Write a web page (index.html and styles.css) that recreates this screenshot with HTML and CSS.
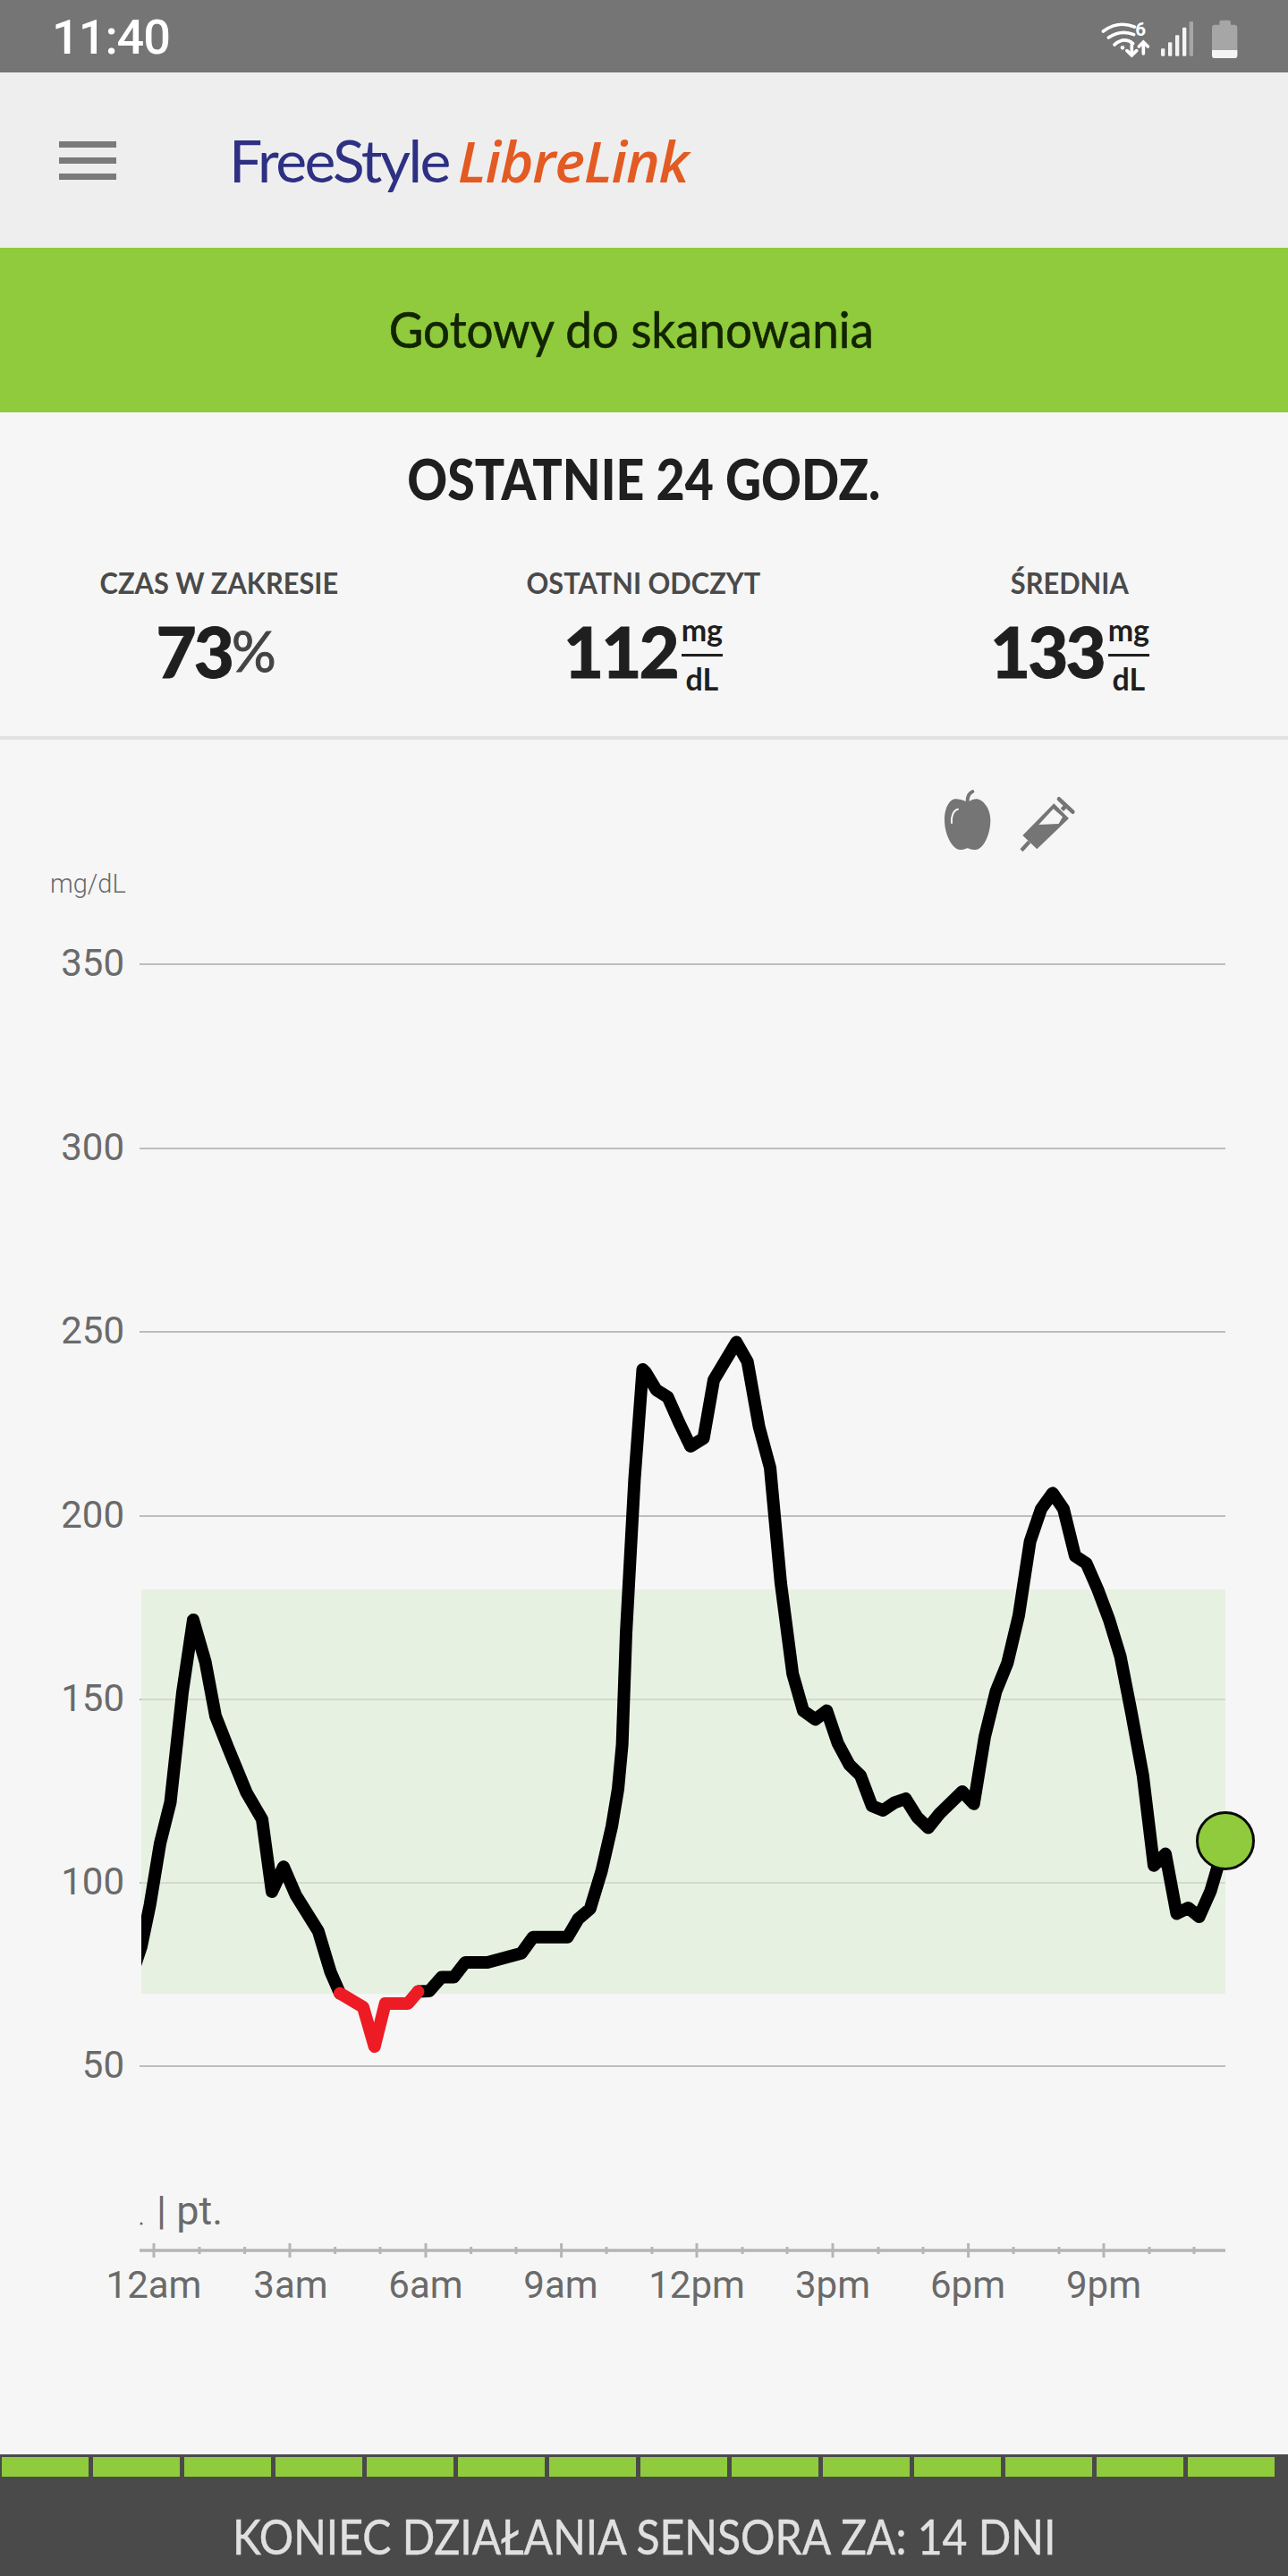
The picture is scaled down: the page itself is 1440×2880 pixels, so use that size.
FILE: index.html
```html
<!DOCTYPE html>
<html>
<head>
  <meta charset="utf-8">
  <title>FreeStyle LibreLink</title>
  <link rel="stylesheet" href="styles.css">
</head>
<body>
  <div class="status-bar">
    <span class="clock">11:40</span>
    <svg class="status-icons" width="240" height="80" viewBox="0 0 720 240">
      <g class="wifi">
        <path d="M100 105Q150 68 205 90"/>
        <path d="M118 126Q160 98 203 116"/>
        <path d="M138 150Q170 122 200 146"/>
        <path d="M196 150V184M180 170L196 186L212 170"/>
        <path d="M235 180V142M220 156L235 141L250 156"/>
      </g>
      <circle class="white-fill" cx="165" cy="160" r="7"/>
      <text class="wifi-six" x="208" y="120">6</text>
      <rect class="white-fill" x="294" y="163" width="13" height="25" rx="3"/>
      <rect class="white-fill" x="318" y="142" width="13" height="46" rx="3"/>
      <rect class="white-fill" x="342" y="118" width="13" height="70" rx="3"/>
      <rect class="white-fill" x="366" y="92" width="13" height="96" rx="3"/>
      <rect class="dim-fill" x="389" y="72" width="13" height="116" rx="3"/>
      <rect class="dim-fill" x="490" y="68" width="38" height="30" rx="6"/>
      <rect class="dim-fill" x="465" y="83" width="85" height="112" rx="10"/>
      <path class="white-fill" d="M465 168H550V185A10 10 0 0 1 540 195H475A10 10 0 0 1 465 185Z"/>
    </svg>
  </div>

  <header class="top-bar">
    <div class="menu-icon"><span></span><span></span><span></span></div>
    <div class="logo"><span class="logo-free">FreeStyle</span><span class="logo-libre">LibreLink</span></div>
  </header>

  <div class="scan-banner"><span>Gotowy do skanowania</span></div>

  <section class="summary">
    <h1 class="summary-title"><span>OSTATNIE 24 GODZ.</span></h1>
    <div class="stats">
      <div class="stat">
        <div class="stat-label"><span>CZAS W ZAKRESIE</span></div>
        <div class="stat-value stat-value-percent">73<span class="percent">%</span></div>
      </div>
      <div class="stat">
        <div class="stat-label"><span>OSTATNI ODCZYT</span></div>
        <div class="stat-value">112<span class="unit"><span class="unit-top">mg</span><span class="unit-bottom">dL</span></span></div>
      </div>
      <div class="stat">
        <div class="stat-label"><span>ŚREDNIA</span></div>
        <div class="stat-value">133<span class="unit"><span class="unit-top">mg</span><span class="unit-bottom">dL</span></span></div>
      </div>
    </div>
  </section>

  <svg class="chart" viewBox="0 827 1440 1917">
    <!-- apple -->
    <g transform="translate(1000 860) scale(0.3333)">
      <path class="icon-fill" d="M245 112C230 102 215 100 205 100C185 100 168 130 168 170C168 220 195 268 220 270C232 272 240 265 245 265C250 265 258 272 272 270C298 268 322 220 322 170C322 130 295 100 275 100C265 100 255 104 245 112Z"/>
      <path class="icon-stem" d="M245 108C245 90 250 80 262 75"/>
      <path class="icon-shine" d="M213 134C197 138 190 158 192 180"/>
      <!-- syringe -->
      <path class="icon-fill" d="M430 222L535 115L585 165L478 268Z"/>
      <path class="icon-window" d="M484 186L533 133L564 160L551 183Z"/>
      <path class="icon-stem syringe-bar" d="M552 100L598 143"/>
      <path class="icon-stem syringe-rod" d="M562 136L578 120"/>
      <path class="icon-stem syringe-needle" d="M452 244L426 272"/>
    </g>

    <text class="mg-label" x="56" y="998">mg/dL</text>

    <line class="grid" x1="156" y1="1078" x2="1370" y2="1078"/>
    <line class="grid" x1="156" y1="1284" x2="1370" y2="1284"/>
    <line class="grid" x1="156" y1="1489" x2="1370" y2="1489"/>
    <line class="grid" x1="156" y1="1695" x2="1370" y2="1695"/>
    <line class="grid" x1="156" y1="1900" x2="1370" y2="1900"/>
    <line class="grid" x1="156" y1="2105" x2="1370" y2="2105"/>
    <line class="grid" x1="156" y1="2310" x2="1370" y2="2310"/>
    <rect class="range" x="158" y="1777" width="1212" height="452"/>

    <text class="y-label" x="139" y="1091">350</text>
    <text class="y-label" x="139" y="1297">300</text>
    <text class="y-label" x="139" y="1502">250</text>
    <text class="y-label" x="139" y="1708">200</text>
    <text class="y-label" x="139" y="1913">150</text>
    <text class="y-label" x="139" y="2118">100</text>
    <text class="y-label" x="139" y="2323">50</text>

    <clipPath id="plot"><rect x="158" y="1000" width="1240" height="1400"/></clipPath>
    <g clip-path="url(#plot)">
      <polyline class="trace" points="150,2200 158,2176 167.6,2130 179,2061 190.5,2015 204,1892 216,1811 229.6,1858 241,1918.6 255,1954 275.5,2004 293,2034 304,2115 317,2087 330.6,2118.6 355.8,2159 369.6,2204.7 380,2228.5"/>
      <polyline class="trace" points="467.4,2226.6 480,2226 493.6,2210.5 507.4,2210.5 520.2,2194 545,2194 583,2183.7 596,2165.7 634.5,2165.7 646.5,2145.4 659.8,2134 672.6,2091.8 684,2042 691,2000 695.6,1950.7 700,1825.7 709.4,1654 718.5,1531 722,1534.5 733.8,1554 746.6,1562 759,1590 772,1617 786.6,1608 798,1542.8 823.3,1500.6 835.7,1522.4 848.6,1595 861,1641 872.9,1769.6 886.2,1871.4 898,1912.6 911.5,1922.3 924.3,1912.6 936.7,1949 949.6,1973 962,1985 974.8,2019 987.2,2024 1000,2015.4 1012.5,2011 1025.3,2031.4 1037.7,2043.5 1050.6,2027.5 1075.8,2003 1088.7,2016.8 1101,1941.7 1113.5,1890.8 1126.3,1859.3 1139,1806 1151.6,1723.6 1164,1687 1176.8,1669.3 1189,1687 1202,1739.6 1214.5,1747.8 1227.3,1777 1240,1810.8 1252.6,1852 1265.4,1917.5 1277.8,1985 1290,2085.7 1303,2072.6 1315.5,2139.5 1328.4,2133 1340.7,2143 1353.6,2113.8 1370,2058"/>
      <polyline class="trace trace-low" points="380,2228.5 406,2244 418.7,2288 430.7,2240 456,2240 467.4,2226.6"/>
    </g>
    <circle class="current" cx="1370" cy="2058" r="31.5"/>

    <circle class="day-mark" cx="158" cy="2486" r="1.5"/>
    <text class="day-label" x="175" y="2487">| pt.</text>

    <line class="axis" x1="156" y1="2516" x2="1370" y2="2516"/>
    <path class="tick-major" d="M172 2508V2524M324 2508V2524M476 2508V2524M627.6 2508V2524M779 2508V2524M931 2508V2524M1082.6 2508V2524M1234 2508V2524"/>
    <path class="tick-minor" d="M223 2512V2520M273.6 2512V2520M374.6 2512V2520M425 2512V2520M526.6 2512V2520M577 2512V2520M678 2512V2520M729 2512V2520M830 2512V2520M880 2512V2520M982 2512V2520M1032 2512V2520M1133 2512V2520M1184 2512V2520M1285 2512V2520M1335 2512V2520"/>

    <text class="x-label" x="172" y="2569">12am</text>
    <text class="x-label" x="325" y="2569">3am</text>
    <text class="x-label" x="476" y="2569">6am</text>
    <text class="x-label" x="627" y="2569">9am</text>
    <text class="x-label" x="779" y="2569">12pm</text>
    <text class="x-label" x="931" y="2569">3pm</text>
    <text class="x-label" x="1082" y="2569">6pm</text>
    <text class="x-label" x="1234" y="2569">9pm</text>
  </svg>

  <footer class="sensor">
    <div class="sensor-days">
      <span></span><span></span><span></span><span></span><span></span><span></span><span></span>
      <span></span><span></span><span></span><span></span><span></span><span></span><span></span>
    </div>
    <div class="sensor-text"><span>KONIEC DZIAŁANIA SENSORA ZA: 14 DNI</span></div>
  </footer>
</body>
</html>
```

FILE: styles.css
```css
* {
  box-sizing: border-box;
}

body {
  margin: 0;
  width: 1440px;
  height: 2880px;
  display: flex;
  flex-direction: column;
  overflow: hidden;
  background-color: #f6f6f6;
  font-family: "Lato", "Noto Sans", sans-serif;
}

/* the app font is narrower than Lato */
.scan-banner span,
.summary-title span,
.stat-label span,
.sensor-text span {
  display: inline-block;
  white-space: nowrap;
}

/* status bar */
.status-bar {
  height: 81px;
  flex: none;
  display: flex;
  justify-content: space-between;
  background-color: #757575;
}

.clock {
  padding-left: 58px;
  font-family: "Roboto", sans-serif;
  font-size: 54px;
  font-weight: 500;
  line-height: 84px;
  letter-spacing: -1px;
  color: #fff;
}

.wifi path {
  fill: none;
  stroke: #fff;
  stroke-width: 11;
  stroke-linecap: round;
}

.wifi-six {
  font-family: "Roboto", sans-serif;
  font-size: 62px;
  font-weight: 700;
  fill: #fff;
}

.white-fill {
  fill: #f4f4f4;
}

.dim-fill {
  fill: #a6a6a6;
}

/* header */
.top-bar {
  height: 196px;
  flex: none;
  display: flex;
  align-items: center;
  padding-left: 66px;
  background-color: #eeeeee;
}

.menu-icon {
  width: 64px;
  display: flex;
  flex-direction: column;
  gap: 11px;
}

.menu-icon span {
  height: 7px;
  background-color: #7a7a7a;
}

.logo {
  margin-left: 126px;
  font-size: 66px;
  line-height: 1;
  white-space: nowrap;
}

.logo-free {
  color: #2e3083;
  letter-spacing: -2.5px;
}

.logo-libre {
  margin-left: 10px;
  font-family: "Open Sans", sans-serif;
  font-size: 64px;
  font-weight: 600;
  font-style: italic;
  letter-spacing: -1.2px;
  color: #e35a22;
}

/* banner */
.scan-banner {
  height: 184px;
  flex: none;
  display: flex;
  align-items: center;
  justify-content: center;
  padding-right: 28px;
  padding-bottom: 3px;
  background-color: #8fcb3c;
  font-size: 56px;
  color: #122400;
}

.scan-banner span {
  transform: scaleX(0.945);
  -webkit-text-stroke: 0.6px #122400;
}

/* stats */
.summary {
  height: 366px;
  flex: none;
  border-bottom: 4px solid #e2e2e2;
}

.summary-title {
  margin: 0;
  padding-top: 39px;
  font-size: 62px;
  font-weight: 900;
  line-height: 70px;
  text-align: center;
  color: #1f1f1f;
}

.summary-title span {
  transform: scaleX(0.894);
}

.stats {
  display: grid;
  grid-template-columns: 490px 458px 496px;
  margin-top: 61px;
}

.stat {
  text-align: center;
}

.stat-label {
  font-size: 33px;
  font-weight: 700;
  line-height: 40px;
  color: #4a4a4a;
}

.stat-label span {
  transform: scaleX(0.933);
}

.stat-value {
  display: flex;
  justify-content: center;
  align-items: flex-start;
  margin-top: 16px;
  font-size: 78px;
  font-weight: 900;
  line-height: 82px;
  letter-spacing: -3px;
  color: #1f1f1f;
  -webkit-text-stroke: 0.8px #1f1f1f;
}

.stat-value-percent {
  padding-right: 7px;
}

.percent {
  font-size: 62px;
  font-weight: 400;
  line-height: 80px;
  letter-spacing: 0;
  color: #444;
  -webkit-text-stroke: 1px #444;
}

.unit {
  display: flex;
  flex-direction: column;
  margin-left: 5px;
  font-size: 34px;
  font-weight: 700;
  line-height: 34px;
  letter-spacing: 0;
  text-align: center;
  -webkit-text-stroke: 0;
}

.unit-top {
  padding-bottom: 10px;
  border-bottom: 3px solid #1f1f1f;
}

.unit-bottom {
  padding-top: 8px;
}

/* chart */
.chart {
  flex: 1;
  display: block;
  width: 1440px;
}

.icon-fill {
  fill: #757575;
}

.icon-stem {
  fill: none;
  stroke: #757575;
  stroke-width: 12;
  stroke-linecap: round;
}

.icon-shine {
  fill: none;
  stroke: #f6f6f6;
  stroke-width: 6;
  stroke-linecap: round;
}

.icon-window {
  fill: #f6f6f6;
}

.syringe-bar {
  stroke-width: 14;
}

.syringe-rod {
  stroke-width: 14;
  stroke-linecap: butt;
}

.syringe-needle {
  stroke-width: 13;
  stroke-linecap: butt;
}

.grid {
  stroke: #aaaaaa;
  stroke-width: 1.5;
}

.range {
  fill: #deefd5;
  fill-opacity: 0.6;
}

.trace {
  fill: none;
  stroke: #000;
  stroke-width: 14;
  stroke-linejoin: round;
  stroke-linecap: round;
}

.trace-low {
  stroke: #ed1c24;
}

.current {
  fill: #8fcb3c;
  stroke: #0a0a0a;
  stroke-width: 3;
}

.y-label,
.x-label,
.day-label,
.mg-label {
  font-family: "Roboto", sans-serif;
  font-size: 42px;
  fill: #6a6a6a;
}

.y-label {
  text-anchor: end;
}

.x-label {
  text-anchor: middle;
}

.day-label {
  font-size: 45px;
}

.day-mark {
  fill: #666;
}

.mg-label {
  font-size: 29px;
  font-weight: 300;
}

.axis {
  stroke: #b5b5b5;
  stroke-width: 3.5;
}

.tick-major {
  stroke: #b5b5b5;
  stroke-width: 3;
}

.tick-minor {
  stroke: #b5b5b5;
  stroke-width: 3;
}

/* sensor footer */
.sensor {
  height: 136px;
  flex: none;
  padding-top: 3px;
  background-color: #4a4a4a;
}

.sensor-days {
  display: flex;
  gap: 5px;
  padding-left: 2px;
}

.sensor-days span {
  width: 97px;
  height: 22px;
  background-color: #8fcb3c;
}

.sensor-text {
  margin-top: 35px;
  font-size: 54px;
  line-height: 64px;
  text-align: center;
  color: #e0e0e0;
}

.sensor-text span {
  transform: scaleX(0.89);
  -webkit-text-stroke: 0.5px #e0e0e0;
}
```
